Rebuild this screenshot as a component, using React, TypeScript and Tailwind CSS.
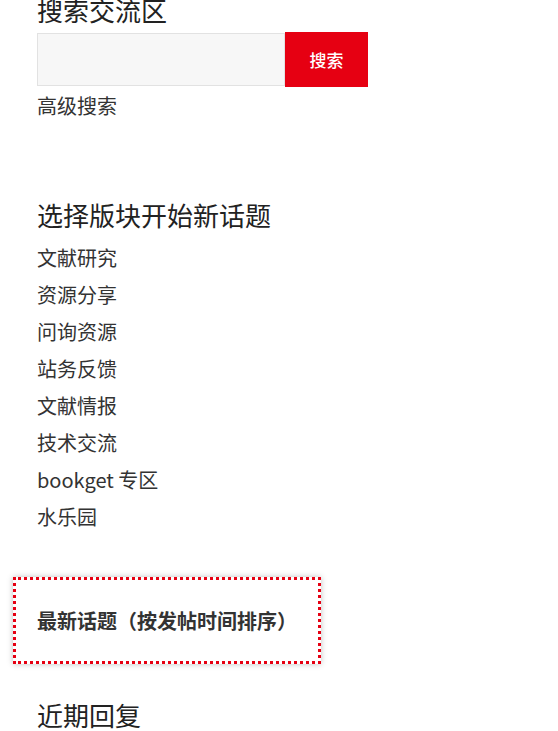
import React from 'react';

const forums = [
  '文献研究',
  '资源分享',
  '问询资源',
  '站务反馈',
  '文献情报',
  '技术交流',
  'bookget 专区',
  '水乐园',
];

const App = () => {
  return (
    <div className="min-h-[731px] bg-white text-[#333] font-['Noto_Sans_CJK_SC','Noto_Sans',sans-serif] overflow-hidden">
      <div className="pl-[37px]">
        {/* Search */}
        <h2 className="mt-[-3px] text-[26px] leading-[26px] font-normal text-[#222]">搜索交流区</h2>
        <form className="mt-[9px] flex items-center" onSubmit={(e) => e.preventDefault()}>
          <input
            type="text"
            className="w-[248px] h-[53px] border border-[#e2e2e2] bg-[#f7f7f7] px-3 outline-none"
          />
          <button
            type="submit"
            className="w-[83px] h-[55px] bg-[#e60012] text-white text-[17px] font-medium"
          >
            搜索
          </button>
        </form>
        <a href="#" className="block mt-[9px] text-[20px] leading-[20px] text-[#333]">
          高级搜索
        </a>

        {/* New topic */}
        <h2 className="mt-[86px] text-[26px] leading-[26px] font-normal text-[#222]">选择版块开始新话题</h2>
        <ul className="mt-[11px]">
          {forums.map((name) => (
            <li key={name} className="text-[20px] leading-[37px]">
              <a href="#" className="text-[#333]">{name}</a>
            </li>
          ))}
        </ul>

        {/* Latest topics (focused) */}
        <div className="mt-[42px] -ml-[24px] w-[308px] h-[87px] border-[3px] border-dotted border-[#e60012] shadow-[0_0_6px_rgba(0,0,0,0.25)] flex items-center pl-[21px]">
          <span className="text-[20px] font-bold text-[#333]">最新话题（按发帖时间排序）</span>
        </div>

        {/* Recent replies */}
        <h2 className="mt-[38px] text-[26px] leading-[26px] font-normal text-[#222]">近期回复</h2>
      </div>
    </div>
  );
};

export default App;
